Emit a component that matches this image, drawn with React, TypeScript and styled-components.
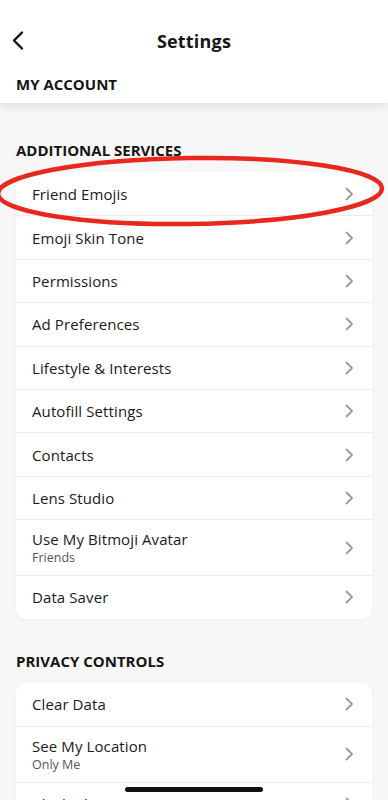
import React from "react"
import styled, { createGlobalStyle } from "styled-components"

const GlobalStyle = createGlobalStyle`
  html, body {
    margin: 0;
    padding: 0;
    background: #f7f7f8;
  }
  body {
    font-family: "Open Sans", "Liberation Sans", sans-serif;
    color: #161616;
  }
`

const Page = styled.div`
  position: relative;
  width: 388px;
  height: 800px;
  overflow: hidden;
  background: #f7f7f8;
`

const Header = styled.header`
  background: #fff;
  box-shadow: 0 2px 10px rgba(0, 0, 0, 0.12);
  position: relative;
  z-index: 1;
`

const TopBar = styled.div`
  height: 66px;
  padding-top: 16px;
  display: flex;
  align-items: center;
  justify-content: center;
  position: relative;
  box-sizing: border-box;
`

const BackButton = styled.div`
  position: absolute;
  left: 9px;
  top: 28px;
  width: 20px;
  height: 26px;
`

const Title = styled.h1`
  margin: 0;
  font-size: 18px;
  font-weight: 700;
  letter-spacing: 0.2px;
`

const HeaderLabel = styled.div`
  padding: 8px 16px 0;
  height: 37px;
  box-sizing: border-box;
  font-size: 15px;
  line-height: 20px;
  font-weight: 700;
`

const SectionTitle = styled.h2`
  margin: 0;
  padding: 0 16px;
  font-size: 15px;
  font-weight: 700;
  line-height: 20px;
`

const Section = styled.section<{ $top: number }>`
  padding-top: ${(p) => p.$top}px;
`

const Card = styled.div`
  margin: 12px 16px 0;
  background: #fff;
  border-radius: 10px;
  box-shadow: 0 1px 4px rgba(0, 0, 0, 0.04);
  overflow: hidden;
`

const Row = styled.div<{ $tall?: boolean }>`
  height: ${(p) => (p.$tall ? 56 : 43.4)}px;
  display: flex;
  align-items: center;
  justify-content: space-between;
  padding: 0 18px 0 16px;
  border-top: 1px solid #ececec;
  box-sizing: border-box;
  &:first-child {
    border-top: none;
  }
`

const RowText = styled.div`
  display: flex;
  flex-direction: column;
`

const Label = styled.span`
  font-size: 15px;
  line-height: 20px;
  letter-spacing: 0.1px;
  color: #1a1a1a;
`

const SubLabel = styled.span`
  font-size: 12.5px;
  line-height: 17px;
  color: #555;
`

const Chevron = () => (
  <svg width="9" height="14" viewBox="0 0 9 14">
    <path d="M1.5 1.5 L7 7 L1.5 12.5" fill="none" stroke="#9b9b9b" strokeWidth="1.8" strokeLinecap="round" strokeLinejoin="round" />
  </svg>
)

const Annotation = styled.svg`
  position: absolute;
  left: 0;
  top: 150px;
  pointer-events: none;
  z-index: 2;
`

const HomeIndicator = styled.div`
  position: absolute;
  left: 125px;
  bottom: 8px;
  width: 138px;
  height: 5px;
  border-radius: 3px;
  background: #111;
  z-index: 3;
`

type Item = { label: string; sub?: string }

const additional: Item[] = [
  { label: "Friend Emojis" },
  { label: "Emoji Skin Tone" },
  { label: "Permissions" },
  { label: "Ad Preferences" },
  { label: "Lifestyle & Interests" },
  { label: "Autofill Settings" },
  { label: "Contacts" },
  { label: "Lens Studio" },
  { label: "Use My Bitmoji Avatar", sub: "Friends" },
  { label: "Data Saver" },
]

const privacy: Item[] = [
  { label: "Clear Data" },
  { label: "See My Location", sub: "Only Me" },
  { label: "Blocked Users" },
]

const SettingsRow = ({ item }: { item: Item }) => (
  <Row $tall={!!item.sub}>
    <RowText>
      <Label>{item.label}</Label>
      {item.sub && <SubLabel>{item.sub}</SubLabel>}
    </RowText>
    <Chevron />
  </Row>
)

export default function App() {
  return (
    <Page>
      <GlobalStyle />
      <Header>
        <TopBar>
          <BackButton>
            <svg width="20" height="26" viewBox="0 0 20 26">
              <path d="M13 4.5 L5 12.5 L13 20.5" fill="none" stroke="#111" strokeWidth="2.4" strokeLinecap="round" strokeLinejoin="round" />
            </svg>
          </BackButton>
          <Title>Settings</Title>
        </TopBar>
        <HeaderLabel>MY ACCOUNT</HeaderLabel>
      </Header>

      <Section $top={37}>
        <SectionTitle>ADDITIONAL SERVICES</SectionTitle>
        <Card>
          {additional.map((it) => (
            <SettingsRow key={it.label} item={it} />
          ))}
        </Card>
      </Section>

      <Section $top={32}>
        <SectionTitle>PRIVACY CONTROLS</SectionTitle>
        <Card>
          {privacy.map((it) => (
            <SettingsRow key={it.label} item={it} />
          ))}
        </Card>
      </Section>

      <Annotation width="388" height="84" viewBox="0 0 388 84">
        <ellipse cx="190" cy="41" rx="192" ry="33" fill="none" stroke="#e8271d" strokeWidth="4.5" transform="rotate(-0.8 190 41)" />
      </Annotation>
      <HomeIndicator />
    </Page>
  )
}
